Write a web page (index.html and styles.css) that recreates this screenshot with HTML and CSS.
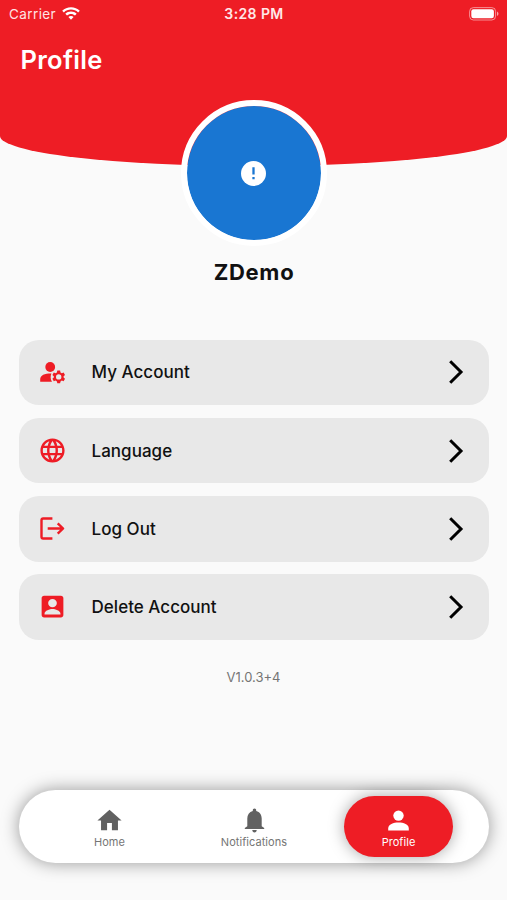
FILE: index.html
```html
<!DOCTYPE html>
<html lang="en">
<head>
<meta charset="utf-8">
<title>Profile</title>
<link rel="stylesheet" href="styles.css">
</head>
<body>
<div class="screen">
  <header class="hero">
    <div class="status">
      <div class="carrier">
        <span>Carrier</span>
        <svg class="wifi" viewBox="0 0 18 14"><path fill="#fff" d="M9 0.2C5.6 0.2 2.500 1.500 0.200 3.700L1.900 5.400C3.800 3.600 6.300 2.600 9 2.600s5.200 1 7.100 2.800l1.700-1.700C15.500 1.500 12.400 0.200 9 0.200zM9 4.600c-2.200 0-4.200.8-5.700 2.200L5 8.500c1.100-1 2.500-1.600 4-1.600s2.900.6 4 1.600l1.700-1.700C13.200 5.400 11.200 4.600 9 4.600zM9 9c-1 0-1.900.4-2.600 1L9 12.800 11.600 10C10.900 9.400 10 9 9 9z"/></svg>
      </div>
      <div class="clock">3:28 PM</div>
      <svg class="battery" viewBox="0 0 30 14"><rect x=".6" y=".6" width="26" height="12.400" rx="3.800" fill="none" stroke="#fff" stroke-opacity=".5"/><rect x="2.300" y="2.300" width="22.600" height="9" rx="2.200" fill="#fff"/><path d="M28 4.600c2 .8 2 3.600 0 4.400z" fill="#fff" fill-opacity=".6"/></svg>
    </div>
    <h1 class="title">Profile</h1>
  </header>
  <div class="avatar">
    <svg viewBox="0 0 24 24"><circle cx="12" cy="12" r="12" fill="#fff"/><path d="M10.900 6h2.200v7h-2.200zM10.900 15.400h2.200v2.200h-2.200z" fill="#1976d2"/></svg>
  </div>
  <h2 class="name">ZDemo</h2>
  <nav class="menu">
    <a class="row">
      <svg class="icon" viewBox="0 0 29 29"><circle cx="12.200" cy="9" r="4.900" fill="#ee1c25"/><path fill="#ee1c25" d="M2.200 23.700v-2.500c0-4.200 4.800-5.900 11.200-5.800-1 2.500-1.200 5.600.6 8.300z"/><path fill="#ee1c25" fill-rule="evenodd" d="M19.300 12.500h2.800l.4 1.900 1.300.8 1.800-.7 1.400 2.500-1.400 1.200v1.400l1.400 1.200-1.400 2.500-1.800-.7-1.300.8-.4 1.900h-2.800l-.4-1.900-1.300-.8-1.800.7-1.400-2.500 1.400-1.200v-1.400l-1.400-1.200 1.400-2.500 1.800.7 1.300-.8zM20.700 16.200a2.700 2.700 0 1 0 0 5.400 2.700 2.700 0 0 0 0-5.400z"/></svg>
      <span class="label">My Account</span>
      <svg class="chevron" viewBox="0 0 16 26"><path d="M2.200 2.200 13 13 2.200 23.800"/></svg>
    </a>
    <a class="row">
      <svg class="icon" viewBox="0 0 24 24"><path fill="#ee1c25" d="M11.990 2C6.470 2 2 6.480 2 12s4.470 10 9.990 10C17.520 22 22 17.520 22 12S17.520 2 11.990 2zm6.930 6h-2.950c-.32-1.250-.78-2.450-1.380-3.560 1.840.63 3.370 1.910 4.330 3.560zM12 4.040c.83 1.200 1.480 2.530 1.910 3.960h-3.820c.43-1.430 1.080-2.760 1.910-3.960zM4.260 14C4.100 13.360 4 12.690 4 12s.1-1.360.26-2h3.380c-.08.66-.14 1.320-.14 2s.06 1.340.14 2H4.260zm.82 2h2.950c.32 1.250.78 2.450 1.380 3.560-1.840-.63-3.370-1.900-4.330-3.560zm2.950-8H5.080c.96-1.660 2.490-2.930 4.330-3.560C8.810 5.550 8.350 6.750 8.030 8zM12 19.960c-.83-1.200-1.480-2.530-1.910-3.960h3.820c-.43 1.430-1.080 2.760-1.910 3.960zM14.340 14H9.660c-.09-.66-.16-1.320-.16-2s.07-1.350.16-2h4.680c.09.65.16 1.320.16 2s-.07 1.340-.16 2zm.25 5.560c.6-1.110 1.060-2.310 1.380-3.560h2.950c-.96 1.650-2.490 2.930-4.330 3.560zM16.360 14c.08-.66.14-1.320.14-2s-.06-1.340-.14-2h3.380c.16.640.26 1.310.26 2s-.1 1.360-.26 2h-3.380z"/></svg>
      <span class="label">Language</span>
      <svg class="chevron" viewBox="0 0 16 26"><path d="M2.200 2.200 13 13 2.200 23.800"/></svg>
    </a>
    <a class="row">
      <svg class="icon line" viewBox="0 0 29 29"><path d="M14.400 4.500H5.200Q3.500 4.500 3.500 6.200v16.600q0 1.700 1.700 1.700h9.200M9.700 14.500h15M19.700 9.300l5.400 5.200-5.400 5.200"/></svg>
      <span class="label">Log Out</span>
      <svg class="chevron" viewBox="0 0 16 26"><path d="M2.200 2.200 13 13 2.200 23.800"/></svg>
    </a>
    <a class="row">
      <svg class="icon" viewBox="0 0 24 24"><path fill="#ee1c25" d="M3 5v14c0 1.100.89 2 2 2h14c1.100 0 2-.9 2-2V5c0-1.100-.9-2-2-2H5c-1.110 0-2 .9-2 2zm12.600 4.200c0 2-1.600 3.500-3.600 3.500s-3.600-1.500-3.600-3.500 1.600-3.500 3.600-3.500 3.600 1.500 3.600 3.500zM5.400 18c0-2.600 4.400-3.900 6.600-3.900s6.600 1.300 6.600 3.900v.6H5.400z"/></svg>
      <span class="label">Delete Account</span>
      <svg class="chevron" viewBox="0 0 16 26"><path d="M2.200 2.200 13 13 2.200 23.800"/></svg>
    </a>
  </nav>
  <p class="version">V1.0.3+4</p>
  <nav class="tabs">
    <a class="tab"><svg viewBox="0 0 24 24"><path d="M10 20v-6h4v6h5v-8h3L12 3 2 12h3v8z"/></svg><span>Home</span></a>
    <a class="tab"><svg viewBox="0 0 29 29"><path d="M14.500 2.500c1.100 0 1.700.8 1.700 1.700v.8c3.600.9 5.500 3.800 5.500 7.500v7.800l2.500 1.700v.9H4.800V22l2.500-1.700v-7.800c0-3.700 1.900-6.600 5.500-7.500v-.8c0-.9.600-1.700 1.700-1.700zM12.300 24h4.400c0 1.500-.9 2.400-2.200 2.400s-2.200-.9-2.200-2.400z"/></svg><span>Notifications</span></a>
    <a class="tab active"><svg viewBox="0 0 29 29"><circle cx="14.500" cy="9.600" r="5.200"/><path d="M4.200 24.600v-2.200c0-4 5.200-5.900 10.300-5.900s10.300 1.900 10.300 5.900v2.200z"/></svg><span>Profile</span></a>
  </nav>
</div>
</body>
</html>
```
FILE: styles.css
```css
* { box-sizing: border-box; }
body { margin: 0; background: #fafafa; font-family: Inter, sans-serif; color: #111; }
.screen { width: 507px; height: 900px; overflow: hidden; display: flex; flex-direction: column; }
.hero { height: 166px; flex: none; background: #ee1d25; color: #fff; border-radius: 0 0 50% 50% / 0 0 30px 30px; }
.status { display: grid; grid-template-columns: 1fr auto 1fr; align-items: center; height: 27px; padding: 0 8px 0 9px; font-size: 13.500px; }
.carrier { display: flex; align-items: center; gap: 6px; letter-spacing: .4px; color: #ffe3e3; }
.wifi { width: 18px; height: 14px; }
.clock { font-weight: 600; font-size: 14px; letter-spacing: .4px; color: #ffe8e8; }
.battery { width: 30px; height: 14px; justify-self: end; }
.title { margin: 17px 0 0 20.500px; font-size: 25.500px; line-height: 32px; font-weight: 600; letter-spacing: .3px; }
.avatar { width: 146px; height: 146px; flex: none; margin: -66px auto 0; border: 6px solid #fff; border-radius: 50%; background: #1976d2; background-clip: padding-box; display: flex; align-items: center; justify-content: center; }
.avatar svg { width: 25px; height: 25px; }
.name { margin: 10.500px 0 0; text-align: center; font-size: 22px; line-height: 30px; font-weight: 700; letter-spacing: .7px; text-indent: 1px; }
.menu { margin: 53px 18.500px 0 19px; display: flex; flex-direction: column; gap: 12.500px; }
.row { height: 65.700px; border-radius: 20px; background: #e8e8e8; display: flex; align-items: center; padding: 0 25px 0 18.500px; }
.icon { width: 29px; height: 29px; }
.line { fill: none; stroke: #ee1c25; stroke-width: 2.400; stroke-linejoin: round; }
.label { flex: 1; margin-left: 25px; font-size: 17px; font-weight: 500; letter-spacing: .03px; }
.chevron { width: 16px; height: 26px; fill: none; stroke: #000; stroke-width: 3; }
.version { margin: 27.500px 0 0; text-align: center; font-size: 13px; line-height: 20px; color: #757575; }
.tabs { margin: auto 18px 37px 19px; height: 73px; flex: none; border-radius: 37px; background: #fff; box-shadow: 0 0 18px rgba(0,0,0,.4); display: flex; align-items: center; justify-content: space-between; padding: 0 36px; }
.tab { width: 109px; height: 61px; border-radius: 31px; display: flex; flex-direction: column; align-items: center; padding-top: 9.500px; font-size: 11px; line-height: 15px; color: #757575; letter-spacing: .05px; }
.tab svg { width: 29px; height: 29px; fill: #616161; }
.active { background: #ee1d25; color: #fff; box-shadow: 0 0 16px rgba(0,0,0,.35); }
.active svg { fill: #fff; }
```
